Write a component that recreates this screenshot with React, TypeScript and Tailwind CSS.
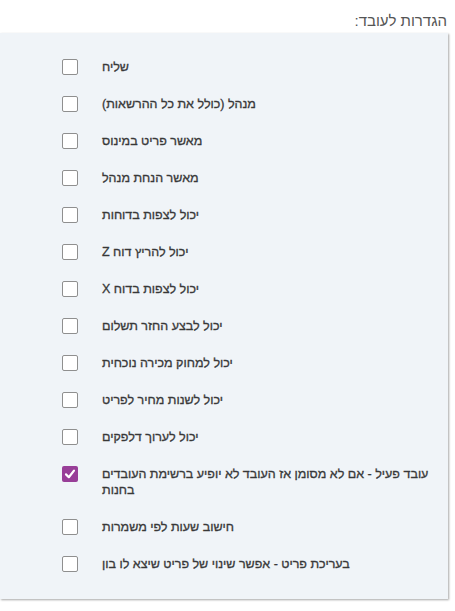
import React from "react";

const items: { label: string; checked?: boolean }[] = [
  { label: "שליח" },
  { label: "מנהל (כולל את כל ההרשאות)" },
  { label: "מאשר פריט במינוס" },
  { label: "מאשר הנחת מנהל" },
  { label: "יכול לצפות בדוחות" },
  { label: "יכול להריץ דוח Z" },
  { label: "יכול לצפות בדוח X" },
  { label: "יכול לבצע החזר תשלום" },
  { label: "יכול למחוק מכירה נוכחית" },
  { label: "יכול לשנות מחיר לפריט" },
  { label: "יכול לערוך דלפקים" },
  { label: "עובד פעיל - אם לא מסומן אז העובד לא יופיע ברשימת העובדים בחנות", checked: true },
  { label: "חישוב שעות לפי משמרות" },
  { label: "בעריכת פריט - אפשר שינוי של פריט שיצא לו בון" },
];

export default function App() {
  return (
    <div className="w-[455px] h-[611px] bg-white font-['Liberation_Sans',Arial,sans-serif]">
      <div dir="rtl" className="h-[33px] pt-[12px] pr-[8px] text-[15px] leading-[18px] text-[#555]">
        הגדרות לעובד:
      </div>
      <div className="w-[448px] bg-[#f0f4f8] shadow-[1px_1px_2px_rgba(0,0,0,0.35)] pt-[26px] pb-[27px] pl-[62px] pr-[10px] flex flex-col gap-[21px]">
        {items.map((it, i) => (
          <div key={i} className="flex items-start gap-[24px]">
            {it.checked ? (
              <div className="w-4 h-4 shrink-0 rounded-[2px] bg-[#983e98] flex items-center justify-center">
                <svg width="14" height="14" viewBox="0 0 14 14">
                  <path d="M3 7.4 L5.8 10.2 L11 3.6" fill="none" stroke="white" strokeWidth="2.2" strokeLinecap="round" strokeLinejoin="round" />
                </svg>
              </div>
            ) : (
              <div className="w-4 h-4 shrink-0 rounded-[2px] border border-[#8f8f8f] bg-white" />
            )}
            <div dir="rtl" className="flex-1 text-left text-[12.5px] leading-4 text-[#383838] [-webkit-text-stroke:0.3px_#383838]">
              {it.label}
            </div>
          </div>
        ))}
      </div>
    </div>
  );
}
